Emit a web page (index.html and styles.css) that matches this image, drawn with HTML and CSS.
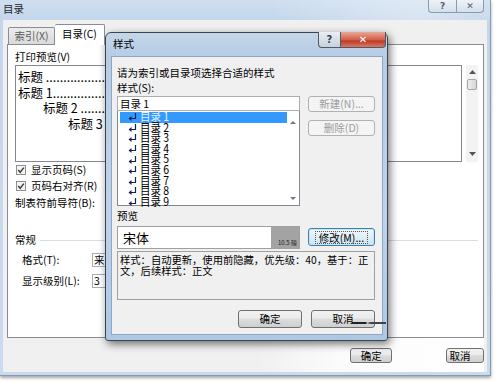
FILE: index.html
```html
<!DOCTYPE html>
<html lang="zh-CN">
<head>
<meta charset="utf-8">
<title>目录</title>
<link rel="stylesheet" href="styles.css">
</head>
<body>
<div class="desk">
  <div class="win">
    <div class="titlebar">
      <span class="wtitle">目录</span>
      <div class="caps">
        <span class="cap">?</span>
        <span class="cap capx">✕</span>
      </div>
    </div>
    <div class="client">
      <div class="tabs">
        <div class="tab">索引(X)</div>
        <div class="tab on">目录(C)</div>
      </div>
      <div class="panel">
        <div class="cols">
          <div class="lcol">
            <div class="lbl">打印预览(V)</div>
            <div class="pbox">
              <div class="pl">标题 ......................................................</div>
              <div class="pl">标题 1..................................................</div>
              <div class="pl l2">标题 2 .............................................</div>
              <div class="pl l3">标题 3 ..........................................</div>
            </div>
            <div class="chk"><svg class="cbx" width="10" height="10" viewBox="0 0 10 10"><rect x="0.5" y="0.5" width="9" height="9" fill="#f4f4f4" stroke="#8e8f8f"/><path d="M2.2 5 L4.2 7.3 L7.8 2.6" fill="none" stroke="#3b3b3b" stroke-width="1.4"/></svg>显示页码(S)</div>
            <div class="chk"><svg class="cbx" width="10" height="10" viewBox="0 0 10 10"><rect x="0.5" y="0.5" width="9" height="9" fill="#f4f4f4" stroke="#8e8f8f"/><path d="M2.2 5 L4.2 7.3 L7.8 2.6" fill="none" stroke="#3b3b3b" stroke-width="1.4"/></svg>页码右对齐(R)</div>
            <div class="lead">制表符前导符(B):</div>
          </div>
          <div class="rcol">
            <div class="wbox"></div>
            <div class="vscroll">
              <svg width="7" height="4" viewBox="0 0 7 4"><path d="M0 4 L3.5 0 L7 4 Z" fill="#555"/></svg>
              <span class="thumb"></span>
              <span class="grow"></span>
              <svg width="7" height="4" viewBox="0 0 7 4"><path d="M0 0 L3.5 4 L7 0 Z" fill="#555"/></svg>
            </div>
          </div>
        </div>
        <div class="grp"><span>常规</span><i class="gline"></i></div>
        <div class="frow"><span class="flbl">格式(T):</span><span class="combo">来</span></div>
        <div class="frow"><span class="flbl">显示级别(L):</span><span class="spin">3</span></div>
      </div>
      <div class="foot">
        <span class="btn bok">确定</span>
        <span class="btn bcancel">取消</span>
      </div>
    </div>
  </div>

  <div class="dlg">
    <div class="dtitle">
      <span class="dtext">样式</span>
      <div class="dcaps">
        <span class="dhelp">?</span>
        <span class="dclose">✕</span>
      </div>
    </div>
    <div class="dclient">
      <div class="prompt">请为索引或目录项选择合适的样式</div>
      <div class="slbl">样式(S):</div>
      <div class="mainrow">
        <div class="pick">
          <div class="sinput">目录 1</div>
          <div class="slist">
            <div class="items">
              <div class="it sel"><svg class="ret" width="9" height="8" viewBox="0 0 9 8"><path d="M7.5 0 V5.5 H3" fill="none" stroke="#1b1f4d" stroke-width="1.2"/><path d="M0.5 5.5 L3.5 3 L3.5 8 Z" fill="#1b1f4d"/></svg><span class="itx">目录 1</span></div>
              <div class="it"><svg class="ret" width="9" height="8" viewBox="0 0 9 8"><path d="M7.5 0 V5.5 H3" fill="none" stroke="#1b1f4d" stroke-width="1.2"/><path d="M0.5 5.5 L3.5 3 L3.5 8 Z" fill="#1b1f4d"/></svg><span class="itx">目录 2</span></div>
              <div class="it"><svg class="ret" width="9" height="8" viewBox="0 0 9 8"><path d="M7.5 0 V5.5 H3" fill="none" stroke="#1b1f4d" stroke-width="1.2"/><path d="M0.5 5.5 L3.5 3 L3.5 8 Z" fill="#1b1f4d"/></svg><span class="itx">目录 3</span></div>
              <div class="it"><svg class="ret" width="9" height="8" viewBox="0 0 9 8"><path d="M7.5 0 V5.5 H3" fill="none" stroke="#1b1f4d" stroke-width="1.2"/><path d="M0.5 5.5 L3.5 3 L3.5 8 Z" fill="#1b1f4d"/></svg><span class="itx">目录 4</span></div>
              <div class="it"><svg class="ret" width="9" height="8" viewBox="0 0 9 8"><path d="M7.5 0 V5.5 H3" fill="none" stroke="#1b1f4d" stroke-width="1.2"/><path d="M0.5 5.5 L3.5 3 L3.5 8 Z" fill="#1b1f4d"/></svg><span class="itx">目录 5</span></div>
              <div class="it"><svg class="ret" width="9" height="8" viewBox="0 0 9 8"><path d="M7.5 0 V5.5 H3" fill="none" stroke="#1b1f4d" stroke-width="1.2"/><path d="M0.5 5.5 L3.5 3 L3.5 8 Z" fill="#1b1f4d"/></svg><span class="itx">目录 6</span></div>
              <div class="it"><svg class="ret" width="9" height="8" viewBox="0 0 9 8"><path d="M7.5 0 V5.5 H3" fill="none" stroke="#1b1f4d" stroke-width="1.2"/><path d="M0.5 5.5 L3.5 3 L3.5 8 Z" fill="#1b1f4d"/></svg><span class="itx">目录 7</span></div>
              <div class="it"><svg class="ret" width="9" height="8" viewBox="0 0 9 8"><path d="M7.5 0 V5.5 H3" fill="none" stroke="#1b1f4d" stroke-width="1.2"/><path d="M0.5 5.5 L3.5 3 L3.5 8 Z" fill="#1b1f4d"/></svg><span class="itx">目录 8</span></div>
              <div class="it"><svg class="ret" width="9" height="8" viewBox="0 0 9 8"><path d="M7.5 0 V5.5 H3" fill="none" stroke="#1b1f4d" stroke-width="1.2"/><path d="M0.5 5.5 L3.5 3 L3.5 8 Z" fill="#1b1f4d"/></svg><span class="itx">目录 9</span></div>
            </div>
            <div class="lscroll">
              <svg width="6" height="3" viewBox="0 0 6 3"><path d="M0 3 L3 0 L6 3 Z" fill="#777"/></svg>
              <span class="grow"></span>
              <svg width="6" height="3" viewBox="0 0 6 3"><path d="M0 0 L3 3 L6 0 Z" fill="#777"/></svg>
            </div>
          </div>
        </div>
        <div class="sidebtns">
          <span class="btn dis">新建(N)...</span>
          <span class="btn dis">删除(D)</span>
        </div>
      </div>
      <div class="plbl">预览</div>
      <div class="prow">
        <div class="pvbox">
          <span class="pvfont">宋体</span>
          <span class="pvsize">10.5 磅</span>
        </div>
        <span class="btn focus"><span class="ring">修改(M)...</span></span>
      </div>
      <div class="desc">样式：自动更新，使用前隐藏，优先级：40，基于：正<br>文，后续样式：正文</div>
      <div class="dbtns">
        <span class="btn dbtn">确定</span>
        <span class="btn dbtn smear">取消</span>
      </div>
    </div>
  </div>
</div>
</body>
</html>
```

FILE: styles.css
```css
* { box-sizing: border-box; margin: 0; padding: 0; }
html, body { width: 502px; height: 383px; overflow: hidden; background: #fff; }
body {
  font-family: "Noto Sans CJK SC", "Liberation Sans", sans-serif;
  font-size: 10.5px;
  line-height: 12px;
  color: #000;
}
.desk { position: relative; width: 502px; height: 383px; background: #fff; }

/* background window */
.win {
  width: 491px;
  height: 376px;
  display: flex;
  flex-direction: column;
  background: linear-gradient(180deg, #cfdff0 0, #c3d6eb 20px, #c9dbee 100%);
  border-right: 1px solid #8799ad;
  border-bottom: 1px solid #8799ad;
  box-shadow: 0 2px 3px rgba(0,0,0,0.35);
}
.titlebar {
  height: 20px; display: flex; align-items: flex-start; padding-left: 3px;
  background: linear-gradient(90deg, rgba(255,255,255,0) 0, rgba(255,255,255,0) 55%, rgba(255,255,255,0.35) 85%, rgba(255,255,255,0.1) 100%);
}
.wtitle { margin-top: 3px; color: #1d1d1d; }
.caps { margin-left: auto; margin-right: 6px; display: flex; }
.cap {
  width: 28px; height: 13px;
  display: flex; align-items: center; justify-content: center;
  border: 1px solid #8a9ab0; border-top: none;
  background: linear-gradient(#eef3f9, #d4dfeb);
  color: #55606e; font-family: "DejaVu Sans", sans-serif; font-size: 9px; font-weight: bold;
}
.cap:first-child { border-radius: 0 0 0 4px; border-right: none; }
.cap.capx { border-radius: 0 0 4px 0; }

.client {
  flex: 1;
  margin: 0 3px 3px 3px;
  background: #f0f0f0;
  padding: 4px 3px 0 4px;
  display: flex;
  flex-direction: column;
}
.tabs { display: flex; align-items: flex-end; height: 20px; padding-left: 1px; position: relative; z-index: 1; }
.tab {
  width: 47px; height: 17px;
  border: 1px solid #898c95; border-bottom: none;
  background: linear-gradient(#ececec, #dadada);
  color: #5c5c5c;
  text-align: center; line-height: 15px;
  border-radius: 2px 2px 0 0;
}
.tab.on {
  width: 50px; height: 21px; margin-bottom: -1px;
  background: #fff; color: #000; border-left: none;
  line-height: 18px;
}
.panel {
  height: 294px;
  border: 1px solid #898c95;
  background: #fff;
  padding: 6px 5px 0 7px;
  display: flex; flex-direction: column;
}
.cols { display: flex; }
.lcol { width: 232px; display: flex; flex-direction: column; }
.lbl { height: 12px; }
.pbox {
  margin-top: 2px; height: 97px;
  border: 1px solid #828790;
  padding: 3px 0 0 2px;
  overflow: hidden;
  font-size: 12.5px; line-height: 15.5px;
}
.pl { white-space: nowrap; }
.pl.l2 { padding-left: 25px; }
.pl.l3 { padding-left: 50px; }
.chk { display: flex; align-items: center; height: 12px; margin-top: 2px; }
.chk + .chk { margin-top: 4px; }
.cbx { margin: 0 5px 0 1px; flex: none; }
.lead { margin-top: 5px; height: 12px; }

.rcol { flex: 1; display: flex; margin-top: 14px; height: 97px; }
.wbox { flex: 1; border: 1px solid #828790; border-left: none; }
.vscroll {
  width: 12px; margin-left: 4px;
  display: flex; flex-direction: column; align-items: center;
  padding: 5px 0 6px;
  background: #f3f3f3;
}
.thumb { width: 10px; height: 11px; margin-top: 5px; border: 1px solid #a5a5a5; border-radius: 2px; background: linear-gradient(90deg, #eee, #d8d8d8); }
.grow { flex: 1; }

.grp { display: flex; align-items: center; margin-top: 25px; height: 12px; }
.gline { flex: 1; height: 1px; background: #d5dfe5; margin: 1px 0 0 4px; }
.frow { display: flex; align-items: center; margin-top: 7px; height: 14px; padding-left: 7px; }
.frow + .frow { margin-top: 7px; }
.flbl { width: 70px; }
.combo, .spin {
  height: 14px; width: 60px;
  border: 1px solid #abadb3; padding-left: 1px;
  line-height: 12px;
}

.foot {
  flex: 1; display: flex; align-items: flex-start; padding-top: 10px;
  background: linear-gradient(90deg, #f0f0f0 0, #f0f0f0 250px, #fbfbfb 330px, #fff 100%);
}
.btn {
  display: inline-flex; align-items: center; justify-content: center;
  border: 1px solid #707070; border-radius: 3px;
  background: linear-gradient(#f2f2f2 0, #ebebeb 45%, #dddddd 50%, #cfcfcf 100%);
  color: #000; white-space: nowrap;
}
.bok { margin-left: 343px; width: 43px; height: 15px; }
.bcancel { margin-left: 54px; width: 38px; height: 15px; justify-content: flex-start; padding-left: 2px; }

/* front dialog */
.dlg {
  position: absolute; left: 105px; top: 32px;
  width: 283px; height: 309px;
  border: 1px solid #3b4550;
  border-radius: 6px 6px 3px 3px;
  background: linear-gradient(180deg, #c5d6e8 0, #b6cde6 22px, #bcd3eb 60%, #aec8e4 100%);
  box-shadow: 2px 3px 8px rgba(0,0,0,0.55);
  display: flex; flex-direction: column;
}
.dtitle { height: 23px; display: flex; align-items: flex-start; padding-left: 7px; }
.dtext { margin-top: 5px; color: #000; }
.dcaps { margin-left: auto; margin-right: 1px; display: flex; margin-top: -1px; }
.dhelp, .dclose {
  height: 16px; display: flex; align-items: center; justify-content: center;
  border: 1px solid #4f5a67; border-top: none;
  font-family: "DejaVu Sans", sans-serif; font-weight: bold;
}
.dhelp { width: 22px; border-right: none; border-radius: 0 0 0 4px; background: linear-gradient(#e9eef4, #c6d1dd); color: #39424d; font-size: 10px; }
.dclose { width: 46px; border-radius: 0 0 4px 0; background: linear-gradient(#e9a898, #d2604a 50%, #c03b25 60%, #d67866); color: #fff; font-size: 10px; }

.dclient {
  flex: 1;
  margin: 0 4px 5px 5px;
  background: #f0f0f0;
  border: 1px solid #8fa7c0;
  padding: 10px 0 0 5px;
  display: flex; flex-direction: column;
}
.prompt { height: 12px; white-space: nowrap; }
.slbl { margin-top: 3px; height: 12px; }
.mainrow { display: flex; margin-top: 2px; }
.pick { width: 183px; display: flex; flex-direction: column; }
.sinput { height: 15px; border: 1px solid #abadb3; background: #fff; padding-left: 2px; line-height: 13px; }
.slist { height: 95px; border: 1px solid #828790; border-top: none; background: #fff; display: flex; }
.items { flex: 1; padding: 1px 0 0 2px; }
.it { display: flex; align-items: center; height: 10.6px; font-size: 10.5px; line-height: 10.6px; padding-left: 8px; white-space: nowrap; }
.itx { transform: scaleY(1.12); }
.it.sel { background: #3399ff; color: #e6f2ff; }
.ret { margin-right: 3px; flex: none; }
.lscroll { width: 12px; display: flex; flex-direction: column; align-items: center; padding: 10px 0 5px; }
.sidebtns { margin-left: 8px; width: 67px; display: flex; flex-direction: column; }
.sidebtns .btn { height: 16px; }
.sidebtns .btn + .btn { margin-top: 8px; }
.btn.dis { border-color: #adb2b5; background: #f4f4f4; color: #9c9c9c; }
.plbl { margin-top: 4px; height: 12px; }
.prow { display: flex; margin-top: 4px; align-items: flex-start; }
.pvbox { width: 183px; height: 23px; border: 1px solid #a0a0a0; background: #fff; display: flex; }
.pvfont { font-size: 13px; line-height: 21px; padding-left: 5px; flex: 1; }
.pvsize {
  width: 28px; background: #a3a3a3; color: #1a1a1a;
  font-size: 6px; line-height: 7px; display: flex; align-items: flex-end; justify-content: flex-end; padding: 0 2px 2px 0;
}
.btn.focus { margin: 2px 0 0 8px; width: 67px; height: 18px; border-color: #3c7fb1; background: linear-gradient(#f3f8fb, #e0eef7 50%, #cde3f1 100%); box-shadow: inset 0 0 0 1px #c4e5f6; }
.ring { border: 1px dotted #555; padding: 0 3px; line-height: 11px; }
.desc { margin-top: 2px; width: 258px; height: 49px; border: 1px solid #a0a0a0; background: #f0f0f0; padding: 3px 2px; font-size: 10.3px; line-height: 10.5px; }
.dbtns { display: flex; justify-content: flex-end; gap: 9px; margin-top: 10px; width: 258px; }
.dbtn { width: 64px; height: 18px; }
.smear { position: relative; }
.smear::after {
  content: ""; position: absolute; left: 40px; top: 11px; width: 34px; height: 2px;
  background: linear-gradient(90deg, #222 0, #222 40%, #bbb 45%, #444 55%, #444 100%);
}
```
